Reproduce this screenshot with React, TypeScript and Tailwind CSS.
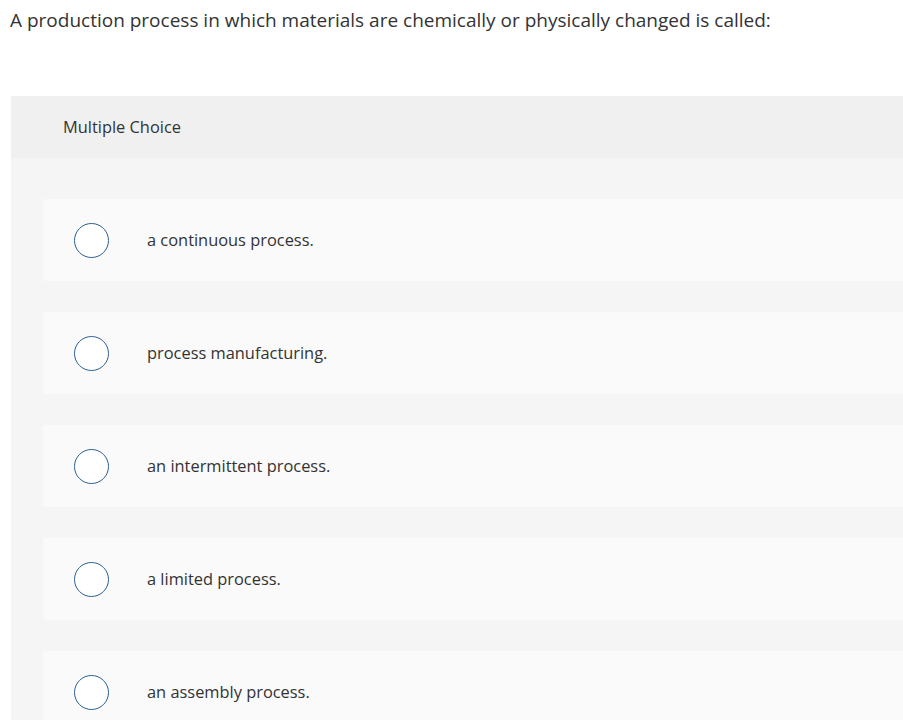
const options = [
  'a continuous process.',
  'process manufacturing.',
  'an intermittent process.',
  'a limited process.',
  'an assembly process.',
];

export default function App() {
  return (
    <div className="h-[720px] overflow-hidden bg-white text-[#333333]" style={{ fontFamily: '"Open Sans", "Liberation Sans", sans-serif' }}>
      <p className="pl-[10px] pt-[6px] text-[19px] leading-[28px]">
        A production process in which materials are chemically or physically changed is called:
      </p>

      <div className="ml-[11px] mt-[62px] w-[900px] bg-[#f5f5f5]">
        <div className="flex h-[62px] items-center bg-[#f0f0f0] pl-[52px] text-[16.4px]">
          Multiple Choice
        </div>

        <div className="flex flex-col gap-[31px] pl-[32px] pt-[41px]">
          {options.map((opt) => (
            <div key={opt} className="flex h-[82px] items-center rounded-l-[3px] bg-[#fafafa]">
              <span className="ml-[31px] h-[35px] w-[35px] shrink-0 rounded-full border-[1.5px] border-[#2d5f93] bg-white" />
              <span className="ml-[38px] text-[16.4px]">{opt}</span>
            </div>
          ))}
        </div>
      </div>
    </div>
  );
}
